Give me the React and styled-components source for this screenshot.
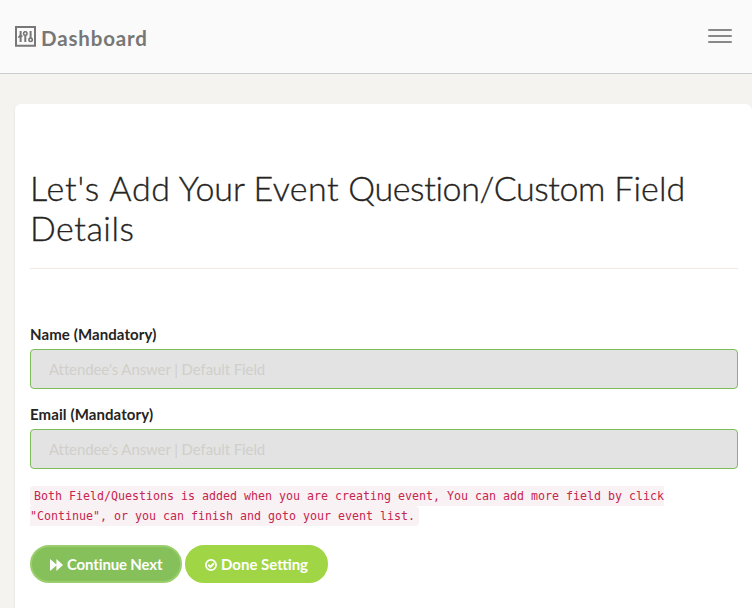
import React from "react";
import styled, { createGlobalStyle } from "styled-components";

const GlobalStyle = createGlobalStyle`
  *, *::before, *::after { box-sizing: border-box; }
  body {
    margin: 0;
    overflow: hidden;
    background: #f4f3ef;
    color: #252422;
    font-family: Lato, "Open Sans", sans-serif;
    font-size: 15px;
  }
`;

const Navbar = styled.header`
  display: flex;
  justify-content: space-between;
  height: 74px;
  padding: 26px 20px 0 15px;
  background: #fafafa;
  border-bottom: 1px solid #ccc;
`;

const Brand = styled.a`
  display: flex;
  gap: 5px;
  height: 24px;
  color: #777;
  font-size: 20.5px;
  font-weight: 700;
  line-height: 24px;
  letter-spacing: 0.85px;
  white-space: nowrap;
`;

const MenuToggle = styled.button`
  display: flex;
  flex-direction: column;
  gap: 4px;
  width: 24px;
  margin: 3px 0 0;
  padding: 0;
  border: 0;
  background: none;
`;

const MenuBar = styled.span`
  display: block;
  width: 24px;
  height: 2px;
  border-radius: 1px;
  background: #888;
`;

const Card = styled.main`
  width: 737px;
  height: 504px;
  margin: 30px 0 0 15px;
  padding: 64px 14px 0 15px;
  border-radius: 6px 6px 0 0;
  background: #fff;
  box-shadow: 0 2px 2px rgba(204, 197, 185, 0.5);
`;

const Title = styled.h1`
  margin: 0;
  height: 101px;
  border-bottom: 1px solid #f1eae0;
  font-size: 34px;
  font-weight: 300;
  line-height: 40px;
  white-space: nowrap;
  -webkit-text-stroke: 0.35px #252422;
`;

const Word = styled.span`
  letter-spacing: ${(p) => p.$tracking};
`;

const Form = styled.form`
  display: flex;
  flex-direction: column;
  gap: 16px;
  padding-top: 56px;
`;

const Field = styled.div`
  display: flex;
  flex-direction: column;
  gap: 4px;
`;

const Label = styled.label`
  height: 20px;
  font-weight: 700;
  line-height: 19px;
  letter-spacing: 0.1px;
`;

const Input = styled.input`
  width: 100%;
  height: 40px;
  padding: 1px 18px;
  border: 1px solid #7ebc59;
  border-radius: 4px;
  background: #e3e3e3;
  font: 400 15px Lato, sans-serif;
  letter-spacing: -0.1px;
  &::placeholder { color: #d0cfca; opacity: 1; }
`;

const Note = styled.p`
  margin: 1px 0 0;
  height: 40px;
  font: 11.63px/20px "DejaVu Sans Mono", monospace;
  white-space: nowrap;
`;

const Code = styled.code`
  padding: 3px 4px;
  border-radius: 4px;
  background: #f9f2f4;
  color: #c7254e;
  font: inherit;
`;

const Actions = styled.div`
  display: flex;
  gap: 3px;
  padding-top: 3px;
`;

const Button = styled.button`
  display: flex;
  align-items: center;
  gap: 4px;
  width: ${(p) => p.$width};
  height: 38px;
  padding: 0 0 0 18px;
  border: 2px solid ${(p) => p.$border};
  border-radius: 19px;
  background: ${(p) => p.$fill};
  color: #fff;
  font: 700 15px Lato, sans-serif;
  letter-spacing: ${(p) => p.$tracking};
  white-space: nowrap;

  svg { margin-top: 1px; }
`;

const PanelIcon = () => (
  <svg width="21" height="21" viewBox="0 0 21 21" fill="none" stroke="#777" strokeWidth="2">
    <path d="M1 1H20V19.8H1Z" />
    <path d="M5.6 5v11M10.3 5v11M15.6 5v11" />
    <path d="M3.3 11.6 5.6 9.4 7.4 10.6" strokeWidth="1.7" />
    <circle cx="10.3" cy="7.5" r="1.7" fill="#fafafa" strokeWidth="1.6" />
    <circle cx="15.6" cy="13.8" r="1.7" fill="#fafafa" strokeWidth="1.6" />
  </svg>
);

const ForwardIcon = () => (
  <svg width="13" height="12" viewBox="0 0 13 12" fill="#fff">
    <path d="M0 0 6.4 5.6V0L13 6 6.4 12V6.4L0 12Z" />
  </svg>
);

const CheckIcon = () => (
  <svg width="12" height="12" viewBox="0 0 12 12" fill="none" stroke="#fff">
    <circle cx="6" cy="6" r="5.1" strokeWidth="1.7" />
    <path d="M3.3 5.8 5.4 7.9 9 4.3" strokeWidth="2" />
  </svg>
);

export default function App() {
  return (
    <>
      <GlobalStyle />
      <Navbar>
        <Brand>
          <PanelIcon />
          Dashboard
        </Brand>
        <MenuToggle aria-label="Toggle navigation">
          <MenuBar />
          <MenuBar />
          <MenuBar />
        </MenuToggle>
      </Navbar>
      <Card>
        <Title>
          <Word $tracking="0.85px">Let's</Word>{" "}
          <Word $tracking="0.7px">Add</Word>{" "}
          <Word $tracking="0">Your</Word>{" "}
          <Word $tracking="0.45px">Event</Word>{" "}
          <Word $tracking="-0.4px">Question/Custom</Word>{" "}
          <Word $tracking="0.12px">Field</Word>
          <br />
          <Word $tracking="0.5px">Details</Word>
        </Title>
        <Form>
          <Field>
            <Label htmlFor="name">Name (Mandatory)</Label>
            <Input id="name" disabled placeholder="Attendee's Answer | Default Field" />
          </Field>
          <Field>
            <Label htmlFor="email">Email (Mandatory)</Label>
            <Input id="email" disabled placeholder="Attendee's Answer | Default Field" />
          </Field>
          <Note>
            <Code>
              Both Field/Questions is added when you are creating event, You can add more field by click
              <br />
              "Continue", or you can finish and goto your event list.
            </Code>
          </Note>
          <Actions>
            <Button type="button" $width="152px" $fill="#85c05b" $border="#9bcf6e" $tracking="-0.15px">
              <ForwardIcon />
              Continue Next
            </Button>
            <Button type="button" $width="143px" $fill="#a0d645" $border="#a0d645" $tracking="0">
              <CheckIcon />
              Done Setting
            </Button>
          </Actions>
        </Form>
      </Card>
    </>
  );
}
